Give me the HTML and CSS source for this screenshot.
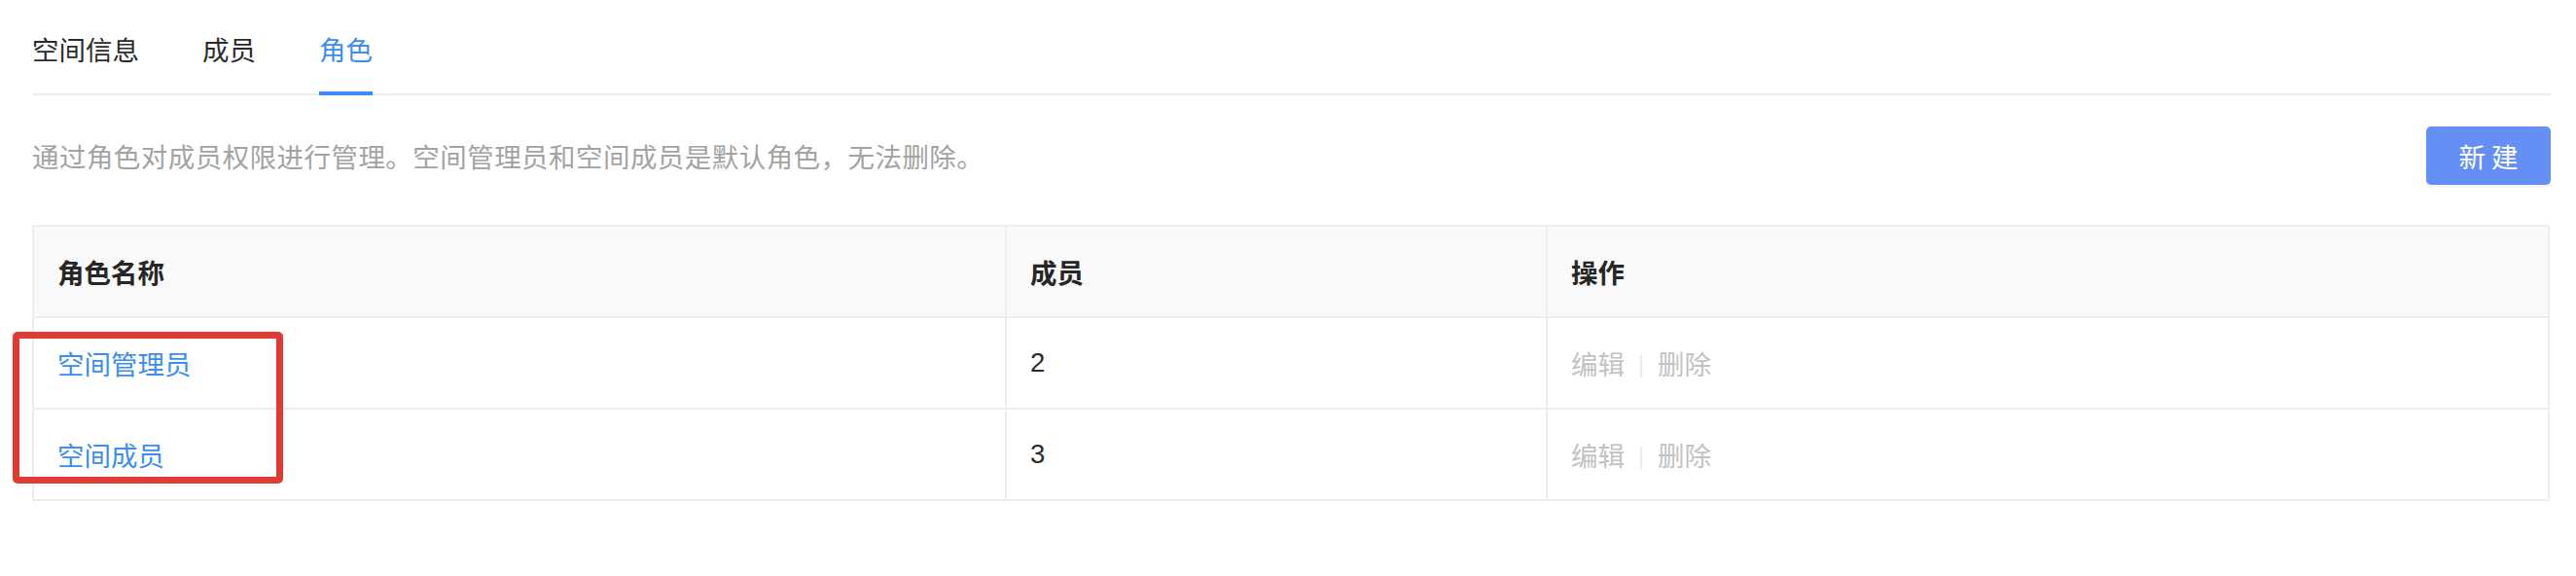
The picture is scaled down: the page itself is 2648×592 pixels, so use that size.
FILE: index.html
```html
<!DOCTYPE html>
<html lang="zh-CN">
<head>
<meta charset="utf-8">
<title>角色</title>
<link rel="stylesheet" href="styles.css">
</head>
<body>
<div class="page">
  <nav class="tabs">
    <div class="tab">空间信息</div>
    <div class="tab">成员</div>
    <div class="tab active">角色</div>
  </nav>
  <div class="toolbar">
    <p class="desc">通过角色对成员权限进行管理。空间管理员和空间成员是默认角色，无法删除。</p>
    <button class="btn-primary">新 建</button>
  </div>
  <table class="roles">
    <colgroup>
      <col class="c1"><col class="c2"><col class="c3">
    </colgroup>
    <thead>
      <tr><th>角色名称</th><th>成员</th><th>操作</th></tr>
    </thead>
    <tbody>
      <tr>
        <td><a class="link">空间管理员</a></td>
        <td class="num">2</td>
        <td><span class="act">编辑</span><span class="sep"></span><span class="act">删除</span></td>
      </tr>
      <tr>
        <td><a class="link">空间成员</a></td>
        <td class="num">3</td>
        <td><span class="act">编辑</span><span class="sep"></span><span class="act">删除</span></td>
      </tr>
    </tbody>
  </table>
  <div class="highlight"></div>
</div>
</body>
</html>
```

FILE: styles.css
```css
html, body {
  margin: 0;
  padding: 0;
  background: #ffffff;
}
body {
  font-family: "Noto Sans CJK SC", "Noto Sans", sans-serif;
  font-size: 27.5px;
  line-height: 28px;
  color: #333333;
}
.page {
  position: relative;
  margin-left: 33px;
  width: 2589px;
  padding-top: 36px;
}
.tabs {
  display: flex;
  border-bottom: 2px solid #ededed;
}
.tab {
  margin-right: 65px;
  padding-bottom: 30px;
  border-bottom: 4px solid transparent;
  margin-bottom: -2px;
  color: #2b2b2b;
}
.tab.active {
  color: #3a8ef0;
  border-bottom-color: #3a8ef0;
}
.toolbar {
  display: flex;
  align-items: center;
  justify-content: space-between;
  margin-top: 32px;
  height: 60px;
}
.desc {
  margin: 0;
  color: #a3a3a3;
  letter-spacing: 0.45px;
}
.btn-primary {
  width: 128px;
  height: 60px;
  border: none;
  border-radius: 5px;
  background: #648ff5;
  color: #ffffff;
  font-family: inherit;
  font-size: 27.5px;
  line-height: 28px;
  padding: 0;
  box-shadow: 0 3px 0 rgba(0, 0, 0, 0.04);
}
.roles {
  margin-top: 41px;
  width: 2588px;
  border-collapse: collapse;
  border: 2px solid #eeeeee;
  table-layout: fixed;
}
.c1 { width: 1000px; }
.c2 { width: 556px; }
.roles th, .roles td {
  border: 2px solid #eeeeee;
  padding: 0 24px;
  height: 92px;
  text-align: left;
  vertical-align: middle;
}
.roles th {
  background: #f9f9f9;
  font-weight: 700;
  color: #262626;
}
.roles td {
  color: #2b2b2b;
}
.roles td.num {
  font-family: "Liberation Sans", "Noto Sans CJK SC", sans-serif;
}
.link {
  color: #3a8ef0;
  text-decoration: none;
}
.act {
  color: #c2c2c2;
}
.sep {
  display: inline-block;
  width: 2px;
  height: 23px;
  margin: 0 16px;
  background: #ebebeb;
  vertical-align: -3px;
}
.highlight {
  position: absolute;
  left: -20px;
  top: 341px;
  width: 264px;
  height: 142px;
  border: 7px solid #e03a32;
  border-radius: 5px;
}
```
